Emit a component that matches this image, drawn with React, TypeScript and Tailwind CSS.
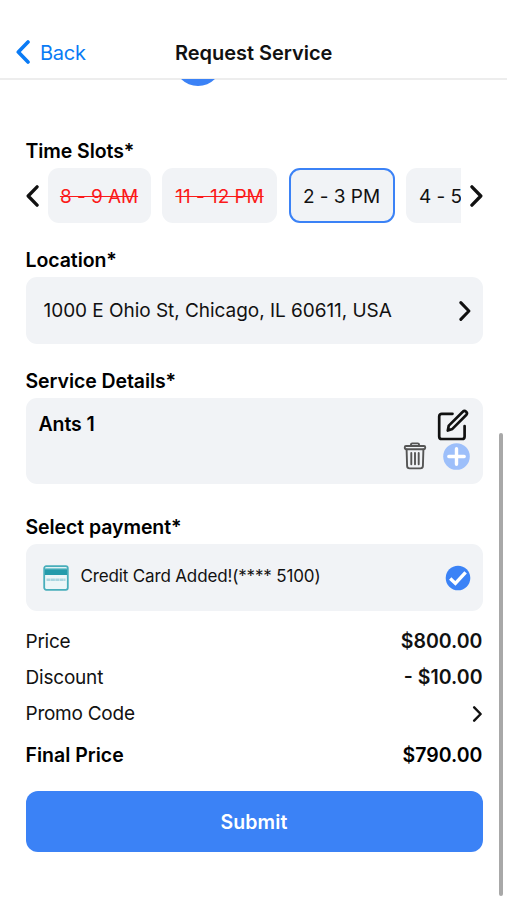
import React from 'react';

type ChevronProps = {
  className: string;
  direction?: 'left' | 'right';
};

const Chevron = ({ className, direction = 'right' }: ChevronProps) => (
  <svg viewBox="0 0 14 24" fill="none" stroke="currentColor" strokeWidth="3.6" strokeLinecap="round" strokeLinejoin="round" className={className}>
    <path d={direction === 'left' ? 'M12 2 2.3 12 12 22' : 'M2 2 11.7 12 2 22'} />
  </svg>
);

const EditIcon = () => (
  <svg viewBox="0 0 32 32" fill="none" stroke="#111111" strokeWidth="2.7" strokeLinejoin="round" className="w-8 h-8">
    <path d="M15.5 4.8H4.8A2.6 2.6 0 0 0 2.2 7.4V27.4A2.6 2.6 0 0 0 4.8 30H25A2.6 2.6 0 0 0 27.6 27.4V17" strokeLinecap="round" />
    <path d="M10.8 21.6 11.8 16.6 25.8 2.8A2.3 2.3 0 0 1 29.2 6L15.4 19.9Z" />
  </svg>
);

const TrashIcon = () => (
  <svg viewBox="0 0 24 28" fill="none" stroke="#555555" strokeWidth="1.9" strokeLinecap="round" strokeLinejoin="round" className="w-6 h-7">
    <path d="M8 4V2.6A1.2 1.2 0 0 1 9.2 1.4H14.8A1.2 1.2 0 0 1 16 2.6V4" />
    <rect x="1.8" y="4" width="20.4" height="3.2" rx="1.2" />
    <path d="M3.6 7.5 4.1 24A2.5 2.5 0 0 0 6.6 26.4H17.4A2.5 2.5 0 0 0 19.9 24L20.4 7.5" />
    <path d="M8.3 11V22.3M12 11V22.3M15.7 11V22.3" />
  </svg>
);

const PlusIcon = () => (
  <svg viewBox="0 0 27 27" className="w-[27px] h-[27px]">
    <circle cx="13.5" cy="13.5" r="13.3" fill="#9dbffa" />
    <path d="M13.5 5.8V21.2M5.8 13.5H21.2" stroke="white" strokeWidth="3.4" strokeLinecap="round" />
  </svg>
);

const CardIcon = () => (
  <svg viewBox="0 0 26 26" className="w-[26px] h-[26px]">
    <rect x="1.2" y="1.2" width="23.6" height="23.6" rx="2" fill="#edf6f8" stroke="#48aebb" strokeWidth="1.8" />
    <path d="M2 3.5H24V10H2Z" fill="#249bab" />
    <path d="M2 3.6H24" stroke="#85cbd3" strokeWidth="1.4" />
    <path d="M3.5 14.7H22.5" stroke="#a9d6e0" strokeWidth="2.4" strokeDasharray="4 0.4" />
  </svg>
);

const CheckIcon = () => (
  <svg viewBox="0 0 26 26" fill="none" className="w-[26px] h-[26px]">
    <circle cx="13" cy="13" r="12.3" fill="#3b82f6" />
    <path d="M5.2 13.6 10.4 18.4 20.6 7.4" stroke="white" strokeWidth="3.4" />
  </svg>
);

const SectionTitle = ({ children }: { children: React.ReactNode }) => (
  <h2 className="h-6 leading-[26px] text-[19.5px] tracking-[-0.08px] font-semibold text-black">{children}</h2>
);

const App = () => {
  return (
    <div className="flex flex-col w-[507px] h-[900px] bg-white overflow-hidden font-['Inter',sans-serif] text-[19px] text-[#111111]">
      <header className="grid grid-cols-[175px_1fr] items-center h-20 pt-[26px] border-b-2 border-[#ededed] shrink-0">
        <button className="flex items-center pl-4 text-[#0a7bf5]">
          <Chevron direction="left" className="w-[14px] h-6" />
          <span className="ml-[10px] pt-px text-[20px] tracking-[-0.25px]">Back</span>
        </button>
        <h1 className="pt-px text-[20px] font-semibold tracking-[-0.03px]">Request Service</h1>
      </header>

      <div className="flex flex-1 min-h-0">
        <main className="ml-[25.5px] w-[457px] shrink-0">
          <div className="h-[7px] pl-[148px] -mt-px overflow-hidden">
            <div className="w-12 h-12 -mt-[41px] rounded-full bg-[#3b82f6]" />
          </div>

          <div className="mt-[52px]">
            <SectionTitle>Time Slots*</SectionTitle>
          </div>
          <div className="flex items-center mt-[6px] h-[55px]">
            <Chevron direction="left" className="w-[13px] h-[22px]" />
            <div className="flex gap-[11.5px] ml-[9px] w-[413px] h-full overflow-hidden whitespace-nowrap tracking-[-0.05px] leading-6">
              <div className="flex items-center justify-center shrink-0 w-[103px] pt-[2px] rounded-[11px] bg-[#f1f3f6] text-[#fb1a1a] line-through">8 - 9 AM</div>
              <div className="flex items-center justify-center shrink-0 w-[115px] pt-[2px] rounded-[11px] bg-[#f1f3f6] text-[#fb1a1a] line-through">11 - 12 PM</div>
              <div className="flex items-center justify-center shrink-0 w-[106px] pt-[2px] rounded-[11px] bg-[#f1f3f6] border-2 border-[#3b82f6]">2 - 3 PM</div>
              <div className="flex items-center shrink-0 w-[106px] pt-[2px] pl-[13px] rounded-[11px] bg-[#f1f3f6]">4 - 5 PM</div>
            </div>
            <Chevron className="w-[13px] h-[22px] ml-[9px]" />
          </div>

          <div className="mt-6">
            <SectionTitle>Location*</SectionTitle>
          </div>
          <button className="flex items-center justify-between mt-[6px] w-full h-[67px] pl-[18px] pr-3 rounded-[11px] bg-[#f1f3f6]">
            <span className="pt-[2px] tracking-[-0.04px]">1000 E Ohio St, Chicago, IL 60611, USA</span>
            <Chevron className="w-3 h-5" />
          </button>

          <div className="mt-6">
            <SectionTitle>Service Details*</SectionTitle>
          </div>
          <div className="flex justify-between mt-[6px] h-[86px] pl-[13px] pr-3 rounded-[11px] bg-[#f1f3f6]">
            <div className="mt-[13px] h-6 leading-[26px] text-[19.5px] tracking-[-0.08px] font-semibold text-black">Ants 1</div>
            <div className="flex flex-col items-end pt-[11px]">
              <div className="mr-[2px]"><EditIcon /></div>
              <div className="flex items-center gap-4 mt-px mr-px">
                <TrashIcon />
                <PlusIcon />
              </div>
            </div>
          </div>

          <div className="mt-[30px]">
            <SectionTitle>Select payment*</SectionTitle>
          </div>
          <div className="flex items-center mt-[6px] h-[67px] pl-[17px] pr-3 rounded-[11px] bg-[#f1f3f6]">
            <CardIcon />
            <span className="ml-3 mb-[2px] text-[17px] tracking-[-0.15px]">Credit Card Added!(**** 5100)</span>
            <span className="ml-auto"><CheckIcon /></span>
          </div>

          <dl className="mt-[13px]">
            <div className="flex items-center justify-between h-9">
              <dt className="tracking-[-0.25px]">Price</dt>
              <dd className="text-[19.5px] font-semibold">$800.00</dd>
            </div>
            <div className="flex items-center justify-between h-9">
              <dt className="tracking-[-0.2px]">Discount</dt>
              <dd className="text-[19.5px] font-semibold">- $10.00</dd>
            </div>
            <div className="flex items-center justify-between h-9">
              <dt className="tracking-[-0.25px]">Promo Code</dt>
              <dd><Chevron className="w-[11px] h-4" /></dd>
            </div>
            <div className="flex items-center justify-between mt-[6px] h-9 text-[19.5px] text-black font-semibold">
              <dt>Final Price</dt>
              <dd>$790.00</dd>
            </div>
          </dl>

          <button className="mt-[17px] w-full h-[61px] pt-[2px] rounded-xl bg-[#3b82f6] text-white text-[19.5px] font-semibold tracking-[0.1px]">Submit</button>
        </main>

        <div className="ml-[16.5px] mt-[353px] w-1 h-[463px] rounded-full bg-[#a8a8a8]" />
      </div>
    </div>
  );
};

export default App;
